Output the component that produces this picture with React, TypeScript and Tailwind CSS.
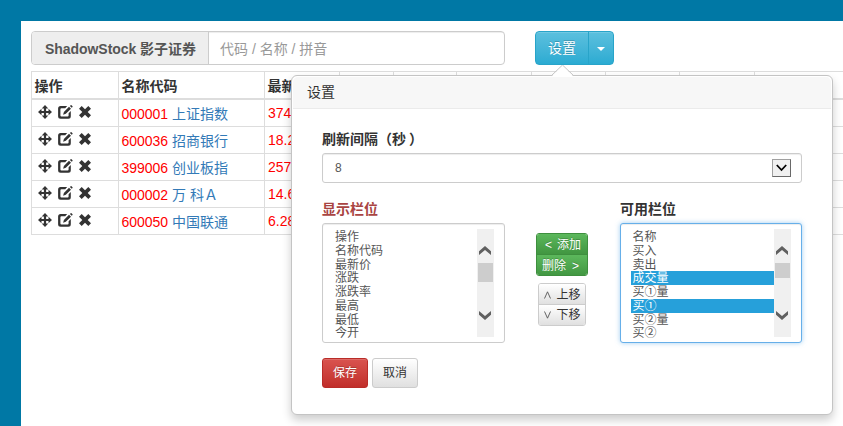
import React from "react";

const columns = [
  { label: "操作", width: "w-[87px]" },
  { label: "名称代码", width: "w-[146px]" },
  { label: "最新价", width: "w-[75px]" },
  { label: "涨跌", width: "w-[54px]" },
  { label: "涨跌率", width: "w-[63px]" },
  { label: "最高", width: "w-[75px]" },
  { label: "最低", width: "w-[74px]" },
  { label: "今开", width: "w-[74px]" },
  { label: "昨收", width: "w-[75px]" },
];

const stocks = [
  { code: "000001", name: "上证指数", price: "3744" },
  { code: "600036", name: "招商银行", price: "18.2" },
  { code: "399006", name: "创业板指", price: "2570" },
  { code: "000002", name: "万 科Ａ", price: "14.6" },
  { code: "600050", name: "中国联通", price: "6.28" },
];

const shown = ["操作", "名称代码", "最新价", "涨跌", "涨跌率", "最高", "最低", "今开"];
const available = ["名称", "买入", "卖出", "成交量", "买①量", "买①", "买②量", "买②"];

function MoveIcon() {
  return (
    <svg width="14" height="14" viewBox="0 0 14 14" fill="#333">
      <path d="M7 0l3.300 3.500H8.100v2.400h2.400V3.700L14 7l-3.500 3.300V8.100H8.100v2.400h2.200L7 14l-3.300-3.500h2.200V8.100H3.500v2.200L0 7l3.500-3.300v2.200h2.400V3.500H3.700z" />
    </svg>
  );
}

function EditIcon() {
  return (
    <svg width="15" height="14" viewBox="0 0 15 14" fill="#333">
      <path d="M2.600 1h6.600L7.200 3.200H3.400a1 1 0 0 0-1 1v6.400a1 1 0 0 0 1 1h6.200a1 1 0 0 0 1-1V8.200l2.200-2.200v5.200a2.500 2.500 0 0 1-2.500 2.500H2.600A2.500 2.500 0 0 1 .1 11.200V3.500A2.500 2.500 0 0 1 2.600 1z" />
      <path d="M11 1.700l2 2-5.200 5.100-2.700 1 .800-2.900zM11.900 1l.8-.8q.4-.3.8 0l1 1q.3.4 0 .8l-.8.8z" />
    </svg>
  );
}

function RemoveIcon() {
  return (
    <svg width="12" height="12" viewBox="0 0 12 12" fill="#333">
      <path d="M2.700 0L6 3.300 9.300 0 12 2.700 8.700 6 12 9.300 9.300 12 6 8.700 2.700 12 0 9.300 3.300 6 0 2.700z" />
    </svg>
  );
}

function Chevron({ down = false, className = "" }: { down?: boolean; className?: string }) {
  return (
    <svg width="13" height="9" viewBox="0 0 13 9" className={className}>
      <path d={down ? "M0 0l6 5 6-5v3.700L6 9 0 3.700z" : "M0 9l6-5 6 5V5.300L6 0 0 5.300z"} fill="#606060" />
    </svg>
  );
}

function ListBox({ items, selected = [], focused = false }: { items: string[]; selected?: string[]; focused?: boolean }) {
  return (
    <div
      className={
        "flex h-[120px] justify-between rounded-[3px] border bg-white py-[5px] pr-[10px] pl-[10px] " +
        (focused
          ? "w-[182px] border-[#66afe9] shadow-[inset_0_1px_1px_rgba(0,0,0,0.075),0_0_5px_rgba(102,175,233,0.6)]"
          : "w-[183px] border-[#ccc] shadow-[inset_0_1px_1px_rgba(0,0,0,0.075)]")
      }
    >
      <div className="h-[111px] grow overflow-hidden pt-px text-[12px] leading-[14.75px] text-[#555]">
        {items.map((item) => (
          <div
            key={item}
            className={
              "h-[13.75px] whitespace-pre " +
              (focused ? "pl-[1.5px] " : "pl-[2px] ") +
              (selected.includes(item) ? "bg-[#26a0da] text-white" : "")
            }
          >
            {item}
          </div>
        ))}
      </div>
      <div className="flex h-[108px] w-[17px] flex-col items-center bg-[#f0f0f0]">
        <Chevron className="mt-[17px] shrink-0" />
        <div className={"mt-[8px] w-[15px] shrink-0 bg-[#cdcdcd] " + (focused ? "h-[15px]" : "h-[19px]")} />
        <Chevron down className="mt-auto mb-[17px] shrink-0" />
      </div>
    </div>
  );
}

function Popover() {
  return (
    <div className="absolute top-[75px] left-[291px] h-[340px] w-[542px] rounded-[6px] border border-[#c4c4c4] bg-white p-px shadow-[0_5px_10px_rgba(0,0,0,0.2)]">
      <svg className="absolute -top-[11px] left-[259px]" width="24" height="13" viewBox="0 0 24 13">
        <path d="M.5 11.500L11.500.5l11 11V13H.5z" fill="#fff" />
        <path d="M0 11L11.500 0 23 11" fill="none" stroke="#c4c4c4" />
      </svg>
      <div className="relative h-[32px] rounded-t-[5px] border-b border-[#ebebeb] bg-[#f7f7f7] pl-[14px] text-[14px] leading-[31px]">
        设置
      </div>
      <div className="px-[29px] pt-[20px]">
        <div className="h-[24px] text-[14px] leading-[20px] font-bold">
          刷新间隔（秒<span className="ml-[3px]">）</span>
        </div>
        <div className="flex h-[30px] w-[480px] items-center justify-between rounded-[3px] border border-[#ccc] pr-[10px] pl-[12px] text-[12px] text-[#555] shadow-[inset_0_1px_1px_rgba(0,0,0,0.075)]">
          <span>8</span>
          <span className="flex h-[18px] w-[19px] items-center justify-center border border-t-[#a0a0a0] border-r-[#696969] border-b-[#696969] border-l-[#a0a0a0] bg-[#f0f0f0]">
            <svg width="11" height="8" viewBox="0 0 11 8">
              <path d="M.8 1l4.700 5 4.700-5" fill="none" stroke="#000" strokeWidth="1.800" />
            </svg>
          </span>
        </div>
        <div className="mt-[16px] flex w-[480px]">
          <div>
            <div className="h-[24px] text-[14px] leading-[20px] font-bold text-[#a94442]">显示栏位</div>
            <ListBox items={shown} />
          </div>
          <div className="mr-[32px] ml-[31px] flex flex-col items-center pt-[34px] text-[12px] leading-[20px]">
            <div className="flex h-[43px] w-[52px] flex-col overflow-hidden rounded-[3px] border border-[#3e8f3e] text-white [text-shadow:0_-1px_0_rgba(0,0,0,0.2)]">
              <div className="flex h-[21px] items-center justify-center gap-[5px] border-b border-[#3e8f3e] bg-linear-to-b from-[#5cb85c] to-[#419641] pt-[2px] pl-[2px]">
                <span>&lt;</span><span>添加</span>
              </div>
              <div className="flex h-[21px] items-center justify-center gap-[6px] bg-linear-to-b from-[#5cb85c] to-[#419641] pt-px pr-[3px]">
                <span>删除</span><span>&gt;</span>
              </div>
            </div>
            <div className="mt-[7px] flex h-[43px] w-[48px] flex-col overflow-hidden rounded-[3px] border border-[#ccc] text-[#333]">
              <div className="flex h-[21px] items-center justify-center gap-[5px] border-b border-[#ccc] bg-linear-to-b from-white to-[#e0e0e0] pt-px pl-px">
                <svg width="7" height="8" viewBox="0 0 7 8"><path d="M.5 7.500L3.500.8l3 6.700" fill="none" stroke="#555" strokeWidth=".9" /></svg>
                <span>上移</span>
              </div>
              <div className="flex h-[21px] items-center justify-center gap-[5px] bg-linear-to-b from-white to-[#e0e0e0] pl-px">
                <svg width="7" height="8" viewBox="0 0 7 8"><path d="M.5.5l3 6.700 3-6.700" fill="none" stroke="#555" strokeWidth=".9" /></svg>
                <span>下移</span>
              </div>
            </div>
          </div>
          <div>
            <div className="h-[24px] text-[14px] leading-[20px] font-bold">可用栏位</div>
            <ListBox items={available} selected={["成交量", "买①"]} focused />
          </div>
        </div>
        <div className="mt-[15px] flex gap-[4px] text-[12px] leading-[28px]">
          <button className="h-[30px] w-[46px] rounded-[3px] border border-[#b92c28] bg-linear-to-b from-[#d9534f] to-[#c12e2a] text-white shadow-[inset_0_1px_0_rgba(255,255,255,0.15)] [text-shadow:0_-1px_0_rgba(0,0,0,0.2)]">
            保存
          </button>
          <button className="h-[30px] w-[46px] rounded-[3px] border border-[#ccc] bg-linear-to-b from-white to-[#e0e0e0] text-[#333]">
            取消
          </button>
        </div>
      </div>
    </div>
  );
}

export default function App() {
  return (
    <div className="relative h-[426px] w-[843px] overflow-hidden bg-[#0078a5] pt-[21px] pl-[21px] font-['Liberation_Sans','Noto_Sans_CJK_SC',sans-serif] text-[14px] text-[#333]">
      <div className="h-[405px] bg-white pt-[10px] pl-[10px]">
        <div className="flex h-[34px] gap-[30px]">
          <div className="flex w-[474px] overflow-hidden rounded-[4px] border border-[#ccc]">
            <div className="w-[177px] border-r border-[#ccc] bg-[#eee] pl-[13px] leading-[34px] font-bold tracking-[-0.05px] whitespace-nowrap text-[#555]">
              ShadowStock 影子证券
            </div>
            <div className="grow pl-[11px] leading-[34px] text-[#999] shadow-[inset_0_1px_1px_rgba(0,0,0,0.075)]">
              代码 / 名称 / 拼音
            </div>
          </div>
          <div className="flex w-[79px] overflow-hidden rounded-[4px] border border-[#28a4c9] bg-linear-to-b from-[#5bc0de] to-[#2aabd2] text-white shadow-[inset_0_1px_0_rgba(255,255,255,0.15)] [text-shadow:0_-1px_0_rgba(0,0,0,0.2)]">
            <div className="w-[53px] border-r border-[#28a4c9] pl-[12px] leading-[33px]">设置</div>
            <div className="flex grow items-center justify-center pt-[2px]">
              <span className="border-x-4 border-t-4 border-x-transparent border-t-white" />
            </div>
          </div>
        </div>
        <div className="mt-[6px] h-[164px] w-[820px] border-t border-l border-[#ddd]">
          <div className="flex h-[28px] border-b-2 border-[#ddd] font-bold">
            {columns.map((column) => (
              <div key={column.label} className={"shrink-0 border-r border-[#ddd] pl-[2.5px] leading-[29px] " + column.width}>
                {column.label}
              </div>
            ))}
          </div>
          {stocks.map((stock) => (
            <div key={stock.code} className="flex h-[27px] border-b border-[#ddd] text-[#f00]">
              <div className="flex w-[87px] border-r border-[#ddd] pt-[5px] pl-[6px]">
                <MoveIcon />
                <span className="ml-[6px]"><EditIcon /></span>
                <span className="mt-px ml-[6px]"><RemoveIcon /></span>
              </div>
              <div className="w-[146px] border-r border-[#ddd] pl-[2.4px] leading-[29px] whitespace-pre">
                {stock.code} <span className="text-[#337ab7]">{stock.name}</span>
              </div>
              <div className="pl-[3px] leading-[27px]">{stock.price}</div>
            </div>
          ))}
        </div>
      </div>
      <Popover />
    </div>
  );
}
